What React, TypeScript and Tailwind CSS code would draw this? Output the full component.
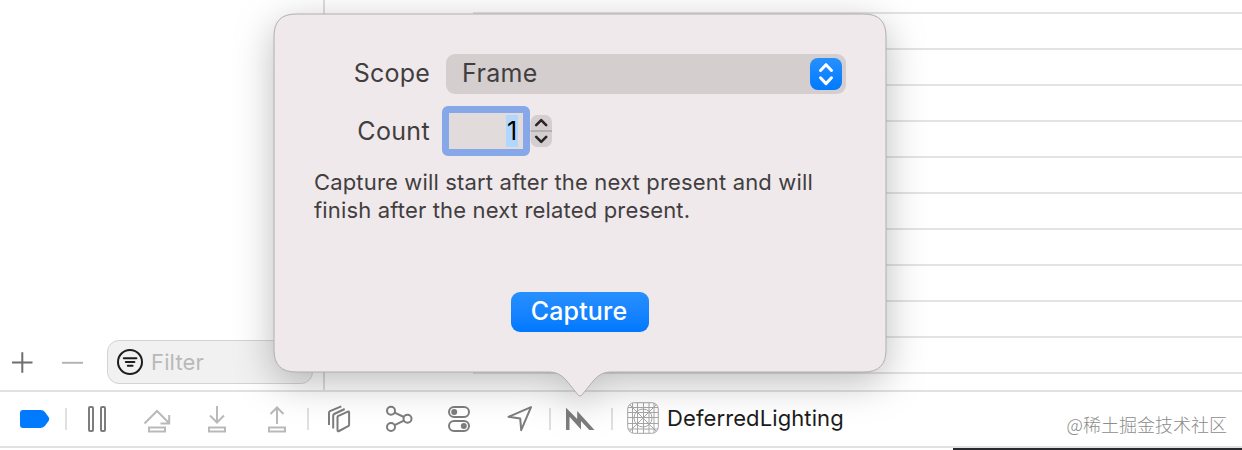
import type { ReactNode } from "react";

interface IconProps {
  width: number;
  className?: string;
  color?: string;
  children: ReactNode;
}

const Icon = ({ width, className, color = "#7d7d7d", children }: IconProps) => {
  return (
    <svg
      width={width}
      height={32}
      viewBox={`0 0 ${width} 32`}
      fill="none"
      stroke={color}
      strokeWidth={2}
      className={`shrink-0 ${className ?? ""}`}
    >
      {children}
    </svg>
  );
};

const Separator = ({ className }: { className: string }) => {
  return <div className={`mt-[6px] h-[22px] w-[2px] shrink-0 bg-[#e0e0e0] ${className}`} />;
};

const Navigator = () => {
  return (
    <div className="flex w-[325px] shrink-0 items-end border-r-2 border-[#dddddd] pb-[6px]">
      <svg width={22} height={44} viewBox="0 0 22 44" className="ml-3 shrink-0" stroke="#6e6e6e" strokeWidth={2}>
        <path d="M0 22.5h20.5M10.3 12.3v20.5" />
      </svg>
      <svg width={22} height={44} viewBox="0 0 22 44" className="ml-7 shrink-0" stroke="#b5b5b5" strokeWidth={2}>
        <path d="M0 22.8h21" />
      </svg>
      <div className="ml-[23px] flex h-11 w-[206px] shrink-0 items-center rounded-[12px] border-[1.5px] border-[#d3d3d3] bg-[#f1f1f1] pl-2">
        <svg width={28} height={28} viewBox="0 0 28 28" fill="none" stroke="#1d1d1d" strokeWidth={2}>
          <circle cx="14" cy="14" r="12" />
          <path d="M7.8 10.2h12.6M9.8 14h8.6M11.8 17.8h4.8" strokeLinecap="round" />
        </svg>
        <span className="ml-[7px] text-[22px] tracking-[0.15px] text-[#b9b9b9]">Filter</span>
      </div>
    </div>
  );
};

const Editor = () => {
  return (
    <div className="ml-[148px] flex-1 overflow-hidden pt-3">
      {Array.from({ length: 11 }).map((_, i) => (
        <div key={i} className="h-9 border-t-2 border-[#e3e3e3]" />
      ))}
    </div>
  );
};

const DebugBar = () => {
  return (
    <div className="flex h-[58px] shrink-0 items-start border-y-2 border-[#e1e1e1] pt-[10px]">
      <Icon width={30} className="ml-5" color="none">
        <path
          d="M3 8h17.5q3 0 4.8 2.4l3.4 4.8q1.3 1.8 0 3.6l-3.4 4.8q-1.8 2.4-4.8 2.4H3q-3 0-3-3V11q0-3 3-3z"
          fill="#007aff"
        />
      </Icon>
      <Separator className="ml-[15px]" />
      <Icon width={20} className="ml-5">
        <rect x="2" y="5" width="4" height="24" rx="1" />
        <rect x="14" y="5" width="4" height="24" rx="1" />
      </Icon>
      <Icon width={28} className="ml-9" color="#b9b9b9">
        <path d="M1.5 21.5L14 9l12 12M26.2 13v8.5H17.5M6 25.5h16v4H6z" />
      </Icon>
      <Icon width={20} className="ml-9" color="#b9b9b9">
        <path d="M10 4v16M3 13.5l7 7 7-7M2 25.5h16v4H2z" />
      </Icon>
      <Icon width={20} className="ml-10" color="#b9b9b9">
        <path d="M10 22V5.5M3.5 12l6.5-6.5 6.5 6.5M2 25.5h16v4H2z" />
      </Icon>
      <Separator className="ml-5" />
      <Icon width={24} className="ml-[18px]">
        <path d="M10.5 15.2q0-1 1-1.4l9.3-4.2q1.3-.5 1.3 1v12.2q0 1-1 1.4l-9 4.8q-1.6.8-1.6-1z" />
        <path d="M6.2 26.5V13.5q0-1 1-1.5l10.5-5M2 23V10.7q0-1 1-1.5L14.3 4.3" />
      </Icon>
      <Icon width={28} className="ml-[34px]">
        <circle cx="6" cy="8.8" r="4" />
        <circle cx="6" cy="25" r="4" />
        <circle cx="22.5" cy="16.8" r="4" />
        <path d="M9.6 10.6l9.3 4.4M9.6 23.2l9.3-4.5" />
      </Icon>
      <Icon width={24} className="ml-[34px]">
        <rect x="2" y="5" width="20" height="10" rx="5" />
        <rect x="2" y="19" width="20" height="10" rx="5" />
        <circle cx="7.2" cy="10" r="3" fill="#7d7d7d" stroke="none" />
        <circle cx="16.8" cy="24" r="3" fill="#7d7d7d" stroke="none" />
      </Icon>
      <Icon width={27} className="ml-[35px]">
        <path d="M25 5.2L2.5 14.8L14.2 16.6L15.2 28.2z" strokeLinejoin="round" />
      </Icon>
      <Separator className="ml-4" />
      <Icon width={30} className="ml-[14px]" color="none">
        <path d="M1 5.7L12.2 17V9L29.5 28H24.3L16 19V27.5L4.5 14.7V28H1z" fill="#7d7d7d" />
      </Icon>
      <Separator className="ml-4" />
      <Icon width={32} className="ml-[14px]" color="#a6a6a6">
        <g strokeWidth={1}>
          <rect x="0.7" y="0.7" width="30.6" height="30.6" rx="6.5" />
          <path d="M5.5 1v30M10.5 1v30M16.5 1v30M22 1v30M27 1v30M1 5.5h30M1 10.5h30M1 15.5h30M1 21.5h30M1 27h30M2.5 2.5l27 27M29.5 2.5l-27 27" />
          <circle cx="16" cy="16" r="9" />
        </g>
      </Icon>
      <span className="ml-2 text-[22px] leading-8 tracking-[0.1px] text-[#1c1c1c]">DeferredLighting</span>
      <span className="mt-[8px] mr-[15px] ml-auto font-['Noto_Sans_CJK_SC',sans-serif] text-[18px] leading-7 font-light text-[#8c8c8c]">
        @稀土掘金技术社区
      </span>
    </div>
  );
};

const CapturePopover = () => {
  return (
    <div className="absolute top-[14px] left-[274px] h-[383px] w-[612px]">
      <svg
        width={612}
        height={383}
        viewBox="0 0 612 383"
        className="absolute inset-0 overflow-visible drop-shadow-[0_10px_19px_rgba(0,0,0,0.26)]"
      >
        <path
          d="M22 0H590Q612 0 612 22V336Q612 358 590 358H336Q327 358 320 366L309.5 379Q306 385 302.5 379L292 366Q285 358 276 358H22Q0 358 0 336V22Q0 0 22 0z"
          fill="#efe9eb"
          stroke="#b0adae"
          strokeWidth={1}
        />
      </svg>
      <div className="relative flex flex-col px-10 pt-10 text-[#423e3f]">
        <div className="flex h-10 items-center">
          <div className="w-[116px] text-right text-[25px] tracking-[0.2px]">Scope</div>
          <div className="ml-4 flex h-10 w-[400px] items-center justify-between rounded-[9px] bg-[#d4cecf] pr-1 pl-4">
            <span className="text-[25px] tracking-[0.35px]">Frame</span>
            <svg width={32} height={32} viewBox="0 0 32 32" fill="none">
              <defs>
                <linearGradient id="blue" x1="0" y1="0" x2="0" y2="1">
                  <stop offset="0" stopColor="#2790ff" />
                  <stop offset="1" stopColor="#007aff" />
                </linearGradient>
              </defs>
              <rect width="32" height="32" rx="8" fill="url(#blue)" />
              <path
                d="M10.5 12.5L16 6.7l5.5 5.8M10.5 19.8l5.5 5.8 5.5-5.8"
                stroke="#fff"
                strokeWidth={3}
                strokeLinecap="round"
                strokeLinejoin="round"
              />
            </svg>
          </div>
        </div>
        <div className="mt-3 flex h-[50px] items-center">
          <div className="w-[116px] pt-[2px] text-right text-[25px] tracking-[0.35px]">Count</div>
          <div className="ml-3 flex h-[50px] w-[88px] items-center justify-end rounded-[6px] border-[7px] border-[#86a8e9] bg-[#e2dbdc] pr-[5px]">
            <span className="flex h-8 w-3 items-center justify-center bg-[#b1d7fc] pt-[2px] text-[25px] text-black">
              1
            </span>
          </div>
          <svg width={22} height={34} viewBox="0 0 22 34" fill="none">
            <rect x="0.5" y="1" width="21.5" height="32" rx="7" fill="#d4cecf" />
            <path d="M0.5 17H22" stroke="#aaa5a6" strokeWidth={1.5} />
            <path
              d="M6.2 11.2l5-5 5 5M6.2 22.8l5 5 5-5"
              stroke="#292627"
              strokeWidth={2.6}
              strokeLinecap="round"
              strokeLinejoin="round"
            />
          </svg>
        </div>
        <p className="mt-3 text-[22px] leading-7 tracking-[0.16px] whitespace-nowrap">
          Capture will start after the next present and will
          <br />
          finish after the next related present.
        </p>
        <button className="mt-[68px] ml-[197px] h-10 w-[138px] rounded-[9px] bg-linear-to-b from-[#2790ff] to-[#0078ff] pr-[2px] text-[25px] font-medium tracking-[0.15px] text-white">
          Capture
        </button>
      </div>
    </div>
  );
};

const App = () => {
  return (
    <div className="relative flex h-[450px] w-[1242px] flex-col overflow-hidden bg-white font-['Inter',sans-serif]">
      <div className="flex h-[390px] shrink-0">
        <Navigator />
        <Editor />
      </div>
      <DebugBar />
      <div className="ml-[953px] h-[2px] bg-[#292a30]" />
      <CapturePopover />
    </div>
  );
};

export default App;
